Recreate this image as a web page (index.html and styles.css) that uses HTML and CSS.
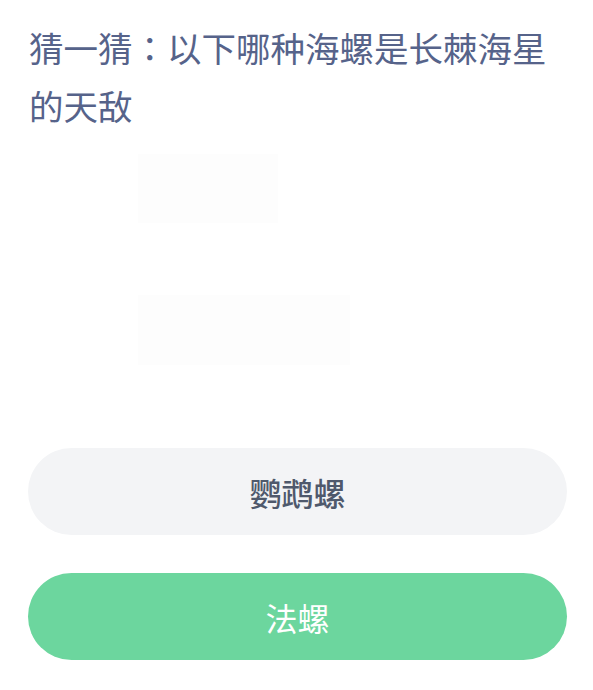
FILE: index.html
```html
<!DOCTYPE html>
<html lang="zh-CN">
<head>
    <meta charset="UTF-8">
    <meta name="viewport" content="width=device-width, initial-scale=1.0">
    <title>猜一猜</title>
    <link rel="stylesheet" href="styles.css">
</head>
<body>
    <div class="quiz">
        <h1 class="question">猜一猜<span class="colon" lang="zh-TW">：</span>以下哪种海螺是长棘海星的天敌</h1>

        <div class="faint">
            <div class="faint-block faint-top"></div>
            <div class="faint-block faint-bottom"></div>
        </div>

        <div class="options">
            <button type="button" class="option">鹦鹉螺</button>
            <button type="button" class="option option-right">法螺</button>
        </div>
    </div>
</body>
</html>
```

FILE: styles.css
```css
body {
    font-family: "Noto Sans CJK SC", "Noto Sans", sans-serif;
    background-color: #ffffff;
    margin: 0;
    padding: 0;
}

.quiz {
    padding: 0 26px 0 28px;
}

.question {
    font-size: 34.5px;
    font-weight: 400;
    line-height: 58px;
    color: #56638a;
    margin: 18px 0 0 1px;
}

/* centred full-width colon, as in the original */
.colon {
    font-family: "Noto Sans CJK TC", "Noto Sans CJK SC", sans-serif;
}

.faint {
    padding-left: 110px;
    margin-top: 20px;
}

.faint-block {
    background-color: #fdfdfd;
}

.faint-top {
    width: 140px;
    height: 69px;
}

.faint-bottom {
    width: 212px;
    height: 70px;
    margin-top: 72px;
}

.options {
    display: flex;
    flex-direction: column;
    gap: 38px;
    margin-top: 83px;
}

.option {
    height: 87px;
    width: 539px;
    border: none;
    border-radius: 44px;
    background-color: #f3f4f6;
    color: #4f596c;
    font-family: "Noto Sans CJK SC", "Noto Sans", sans-serif;
    font-size: 32px;
    font-weight: 500;
    padding: 0;
    cursor: pointer;
}

.option-right {
    background-color: #6cd69e;
    color: #ffffff;
    font-weight: 400;
}
```
